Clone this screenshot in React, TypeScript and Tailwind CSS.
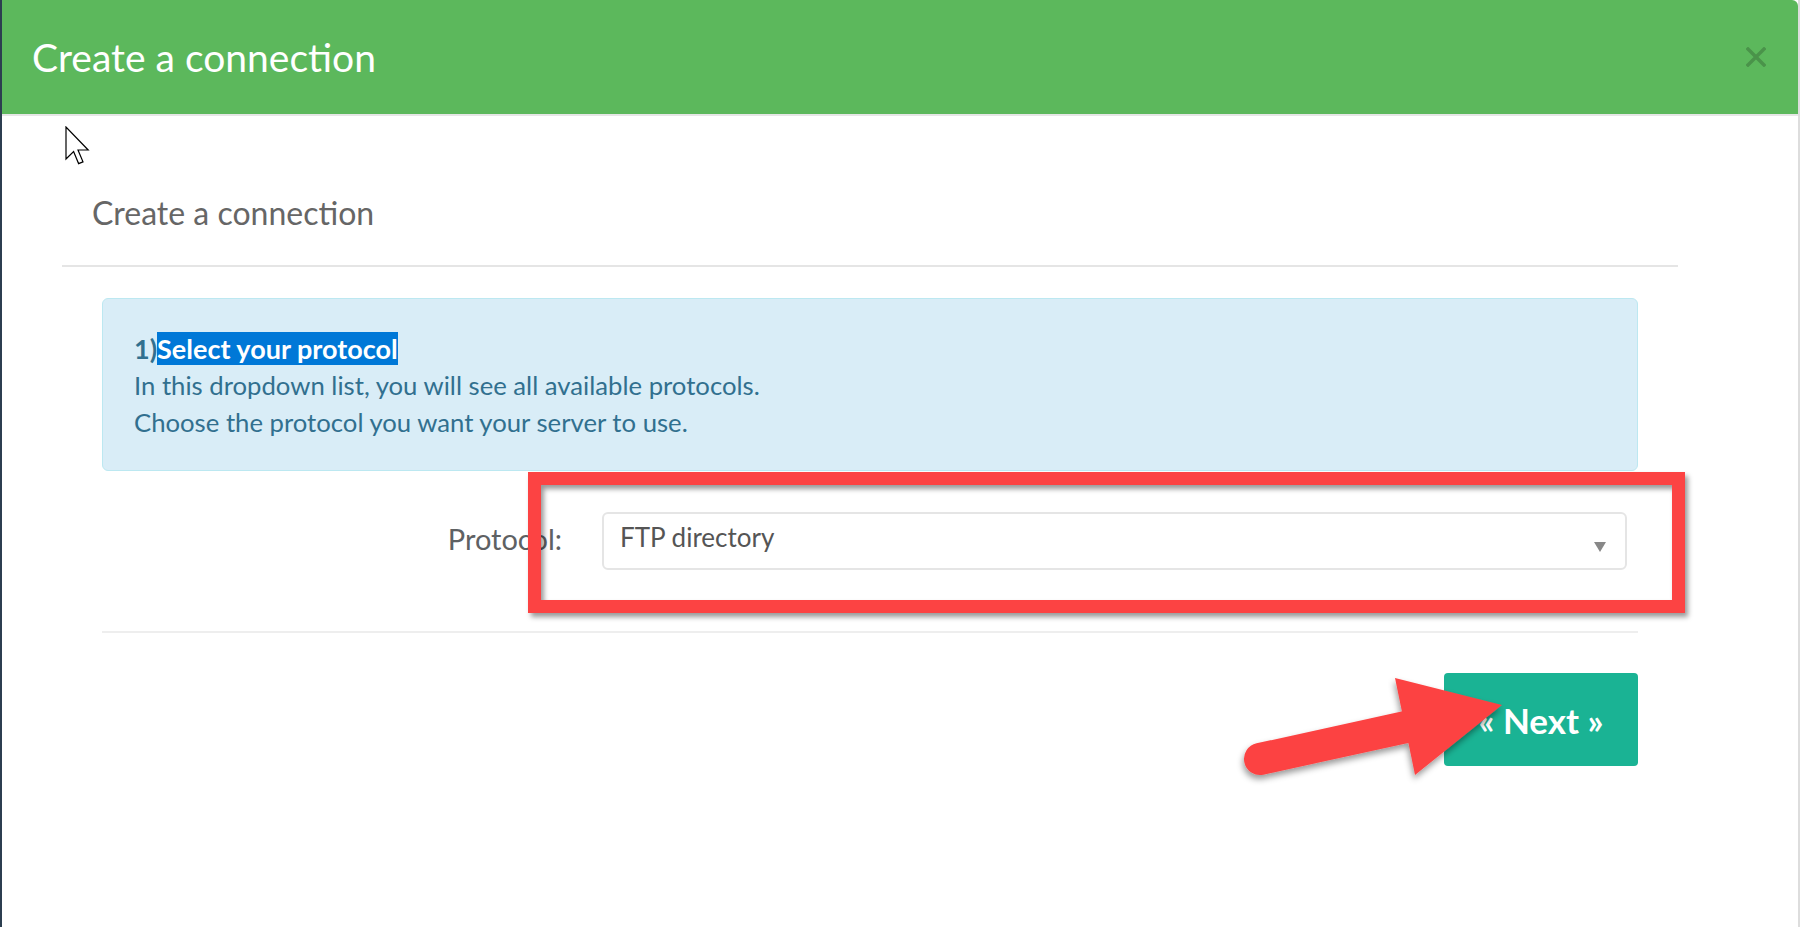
import React from "react";

const CloseIcon = () => (
  <svg width="20" height="20" viewBox="0 0 20 20">
    <path d="M2 2 L18 18 M18 2 L2 18" stroke="#4a934a" strokeWidth="3.4" strokeLinecap="square" />
  </svg>
);

const Cursor = () => (
  <svg width="26" height="40" viewBox="0 0 13 20" className="absolute left-[63px] top-[126px]">
    <path
      d="M0.5 0.5 L0.5 16.5 L4.3 12.8 L6.8 18.8 L9 17.9 L6.5 12 L11.6 12 Z"
      fill="#fff"
      stroke="#000"
      strokeWidth="0.6"
      strokeLinejoin="miter"
    />
  </svg>
);

const RedArrow = () => (
  <svg width="320" height="160" viewBox="0 0 320 160" className="absolute left-[1218px] top-[650px]">
    <defs>
      <filter id="arrowShadow" x="-20%" y="-20%" width="140%" height="160%">
        <feDropShadow dx="-1" dy="4" stdDeviation="3" floodColor="#000" floodOpacity="0.4" />
      </filter>
    </defs>
    <g filter="url(#arrowShadow)" fill="#fc4343">
      <line x1="40" y1="109" x2="186" y2="77" stroke="#fc4343" strokeWidth="32" strokeLinecap="round" />
      <polygon points="175,28 282,55 195,125" />
    </g>
  </svg>
);

export default function App() {
  return (
    <div
      className="flex h-[927px] w-full overflow-hidden bg-white"
      style={{ fontFamily: "Lato, 'Open Sans', sans-serif" }}
    >
      <div className="w-[2px] bg-[#2c3e50]" />

      <div className="relative flex w-[1796px] flex-col rounded-md bg-white">
        <div className="flex h-[116px] items-center justify-between rounded-tr-md border-b-2 border-[#e6e6e6] bg-[#5cb85c] pl-[30px] pr-[32px]">
          <h1 className="text-[39px] leading-[1.2] text-white">Create a connection</h1>
          <CloseIcon />
        </div>

        <div className="w-[1676px] pl-[60px]">
          <h2 className="pl-[30px] pt-[78px] text-[32px] leading-[1.2] text-[#666]">Create a connection</h2>
          <div className="mt-[33px] border-t-2 border-[#e5e5e5]" />

          <div className="px-[40px]">
            <div className="mt-[31px] rounded-md border border-[#bce8f1] bg-[#d9edf7] pb-[29px] pl-[31px] pt-[31px] text-[25.7px] leading-[37px] text-[#31708f]">
              <p className="text-[27px] font-bold">
                <span>1)</span>
                <span className="bg-[#0078d7] text-white">Select your protocol</span>
              </p>
              <p>In this dropdown list, you will see all available protocols.</p>
              <p>Choose the protocol you want your server to use.</p>
            </div>

            <div className="mt-[41px] flex items-start">
              <label className="w-[460px] pt-[11px] text-right text-[29px] leading-[32px] text-[#5e6163]">
                Protocol:
              </label>
              <div className="ml-[40px] mr-[11px] flex h-[58px] flex-1 items-start justify-between rounded-md border-2 border-[#e5e5e5] bg-white pl-[16px] pr-[19px] pt-[7px]">
                <span className="text-[26px] leading-[32px] text-[#555]">FTP directory</span>
                <svg width="12" height="10" viewBox="0 0 12 10" className="mt-[21px]">
                  <path d="M0 0 L12 0 L6 10 Z" fill="#888" />
                </svg>
              </div>
            </div>

            <div className="mt-[61px] border-t-2 border-[#eeeeee]" />

            <div className="mt-[40px] flex justify-end">
              <button className="h-[93px] w-[194px] rounded bg-[#1ab394] text-[35px] font-bold text-white">
                « Next »
              </button>
            </div>
          </div>
        </div>

        <div className="absolute left-[526px] top-[472px] h-[141px] w-[1157px] border-[13px] border-[#fc4343] shadow-[3px_4px_5px_rgba(0,0,0,0.4),inset_3px_4px_5px_rgba(0,0,0,0.4)]" />
        <RedArrow />
        <Cursor />
      </div>

      <div className="w-[4px] border-l-2 border-[#dddddd] bg-white" />
    </div>
  );
}
